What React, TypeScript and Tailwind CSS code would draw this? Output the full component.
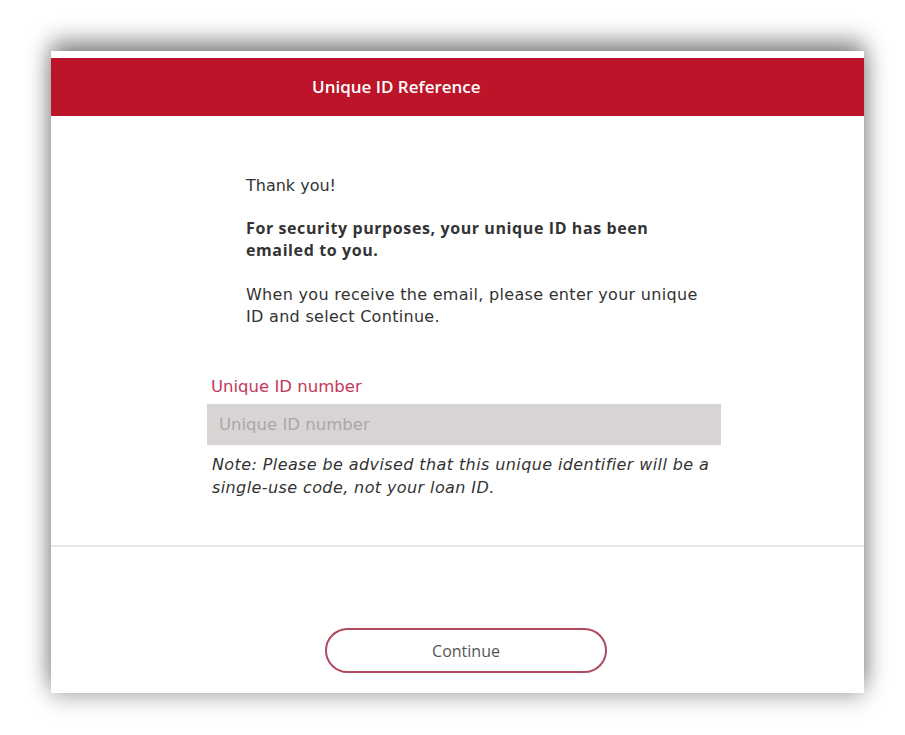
const sans = { fontFamily: '"DejaVu Sans", "Open Sans", sans-serif' };
const heading = { fontFamily: '"Open Sans", "DejaVu Sans", sans-serif' };

export default function App() {
  return (
    <div className="w-[905px] h-[735px] bg-white overflow-hidden pt-[51px] pl-[51px]" style={sans}>
      <div className="w-[813px] h-[642px] bg-white pt-[7px] flex flex-col shadow-[0_-10px_22px_rgba(0,0,0,0.45),0_6px_22px_rgba(0,0,0,0.22)]">
        <div className="h-[58px] bg-[#bc1529] flex items-center pl-[261px]">
          <span className="text-white text-[17px] font-semibold" style={heading}>Unique ID Reference</span>
        </div>

        <div className="pt-[59px] pl-[195px] w-[665px] text-[16px] leading-[22px] text-[#333]">
          <p>Thank you!</p>
          <p className="mt-5 font-bold w-[420px] tracking-[0.6px]" style={heading}>
            For security purposes, your unique ID has been emailed to you.
          </p>
          <p className="mt-[23px] w-[465px] tracking-[0.3px]">
            When you receive the email, please enter your unique ID and select Continue.
          </p>
        </div>

        <div className="mt-[48px] ml-[156px] w-[514px]">
          <label className="block pl-[4px] text-[16.5px] leading-[22px] text-[#c3385a]">Unique ID number</label>
          <input
            className="mt-[6px] w-full h-[41px] bg-[#d8d4d4] px-3 text-[16.5px] text-[#333] placeholder:text-[#aaa6a6] outline-none"
            placeholder="Unique ID number"
          />
          <p className="mt-[8px] pl-[5px] text-[16px] leading-[23px] tracking-[0.4px] italic text-[#333]">
            Note: Please be advised that this unique identifier will be a single-use code, not your loan ID.
          </p>
        </div>

        <div className="mt-[46px] h-[2px] bg-[#e8e8e8]" />

        <div className="flex-1 flex items-end justify-center pb-[20px] pl-[17px]">
          <button className="w-[282px] h-[45px] rounded-full border-2 border-[#b04a5e] bg-white text-[16px] text-[#555]" style={heading}>
            Continue
          </button>
        </div>
      </div>
    </div>
  );
}
